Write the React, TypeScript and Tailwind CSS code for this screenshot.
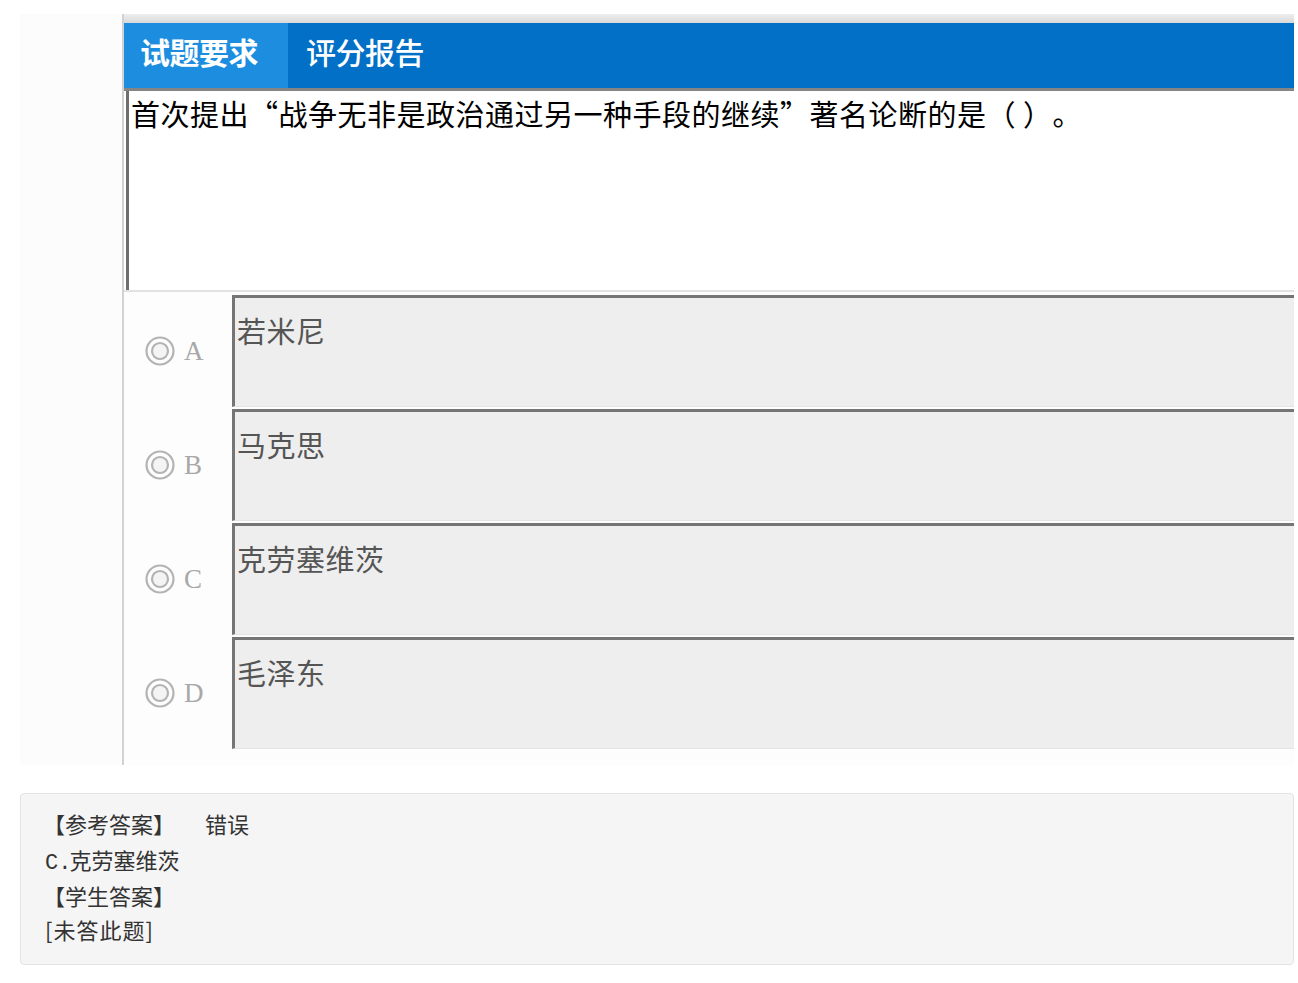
import React from "react";

const options = [
  { letter: "A", text: "若米尼" },
  { letter: "B", text: "马克思" },
  { letter: "C", text: "克劳塞维茨" },
  { letter: "D", text: "毛泽东" },
];

function Radio() {
  return (
    <svg width="32" height="32" viewBox="0 0 32 32">
      <circle cx="16" cy="16" r="13.5" fill="none" stroke="#b3b3b3" strokeWidth="2.2" />
      <circle cx="16" cy="16" r="8" fill="#f4f4f4" stroke="#b3b3b3" strokeWidth="2.2" />
    </svg>
  );
}

export default function App() {
  const cjk = { fontFamily: '"Noto Sans CJK SC", "Noto Sans", sans-serif' };
  return (
    <div className="w-[1298px] h-[983px] bg-white overflow-hidden [text-spacing-trim:space-all]" style={cjk}>
      <div className="pt-[14px] pl-[20px] pr-[4px]">
        <div className="flex h-[751px]">
          <div className="w-[102px] bg-[#fcfcfc]" />
          <div className="flex-1 flex flex-col border-l-2 border-[#d2d2d2]">
            <div className="h-[9px] bg-gradient-to-b from-[#eeeeee] to-[#d9d9d9]" />
            <div className="h-[65px] bg-[#0270c6] flex items-stretch">
              <div className="w-[164px] bg-[#1d8de0] flex items-center pl-[16px] pb-[9px] text-white text-[30px] font-bold leading-none tracking-[-0.5px]">
                试题要求
              </div>
              <div className="flex items-center pl-[18px] pb-[9px] text-white text-[30px] leading-none tracking-[-0.5px] font-medium">
                评分报告
              </div>
            </div>
            <div className="h-[3px] bg-[#858585]" />
            <div className="h-[199px] bg-white flex">
              <div className="w-[2px] bg-white" />
              <div className="w-[3px] bg-[#6e6e6e]" />
              <div className="flex-1 pl-[2px] pt-[5px] text-[29px] leading-[1.2] text-black tracking-[0.5px] whitespace-pre">
                首次提出“战争无非是政治通过另一种手段的继续”著名论断的是（ ）。
              </div>
            </div>
            <div className="h-[2px] bg-[#e2e2e2]" />
            <div className="flex-1 bg-[#fdfdfd] pt-[3px] flex flex-col gap-[2px]">
              {options.map((o) => (
                <div key={o.letter} className="flex h-[112px]">
                  <div className="w-[108px] flex items-center pl-[20px] gap-[8px]">
                    <Radio />
                    <span
                      className="text-[27px] text-[#a8a8a8] leading-none"
                      style={{ fontFamily: '"Liberation Serif", "DejaVu Serif", serif' }}
                    >
                      {o.letter}
                    </span>
                  </div>
                  <div className="flex-1 bg-[#eeeeee] border-t-[3px] border-l-[3px] border-[#757575] border-b border-b-[#e4e4e4] pl-[2px] pt-[15px] text-[29px] leading-[1.2] text-[#555555] tracking-[0.5px]">
                    {o.text}
                  </div>
                </div>
              ))}
            </div>
          </div>
        </div>
      </div>
      <div className="mt-[28px] ml-[20px] mr-[4px] h-[172px] bg-[#f5f5f5] border border-[#e3e3e3] rounded-[4px] pl-[24px] pt-[11px] text-[22px] text-[#333333]">
        <div className="h-[36px] leading-[36px] whitespace-pre">
          <span className="-ml-[2px]">【参考答案】</span>
          <span className="ml-[30px]">错误</span>
        </div>
        <div className="h-[36px] leading-[36px] flex items-baseline">
          <span className="text-[22px]" style={{ fontFamily: '"Liberation Mono", monospace' }}>C.</span>
          <span className="ml-[-2px]">克劳塞维茨</span>
        </div>
        <div className="h-[35px] leading-[36px] -ml-[2px]">【学生答案】</div>
        <div className="h-[36px] leading-[34px] tracking-[1px]">[未答此题]</div>
      </div>
    </div>
  );
}
